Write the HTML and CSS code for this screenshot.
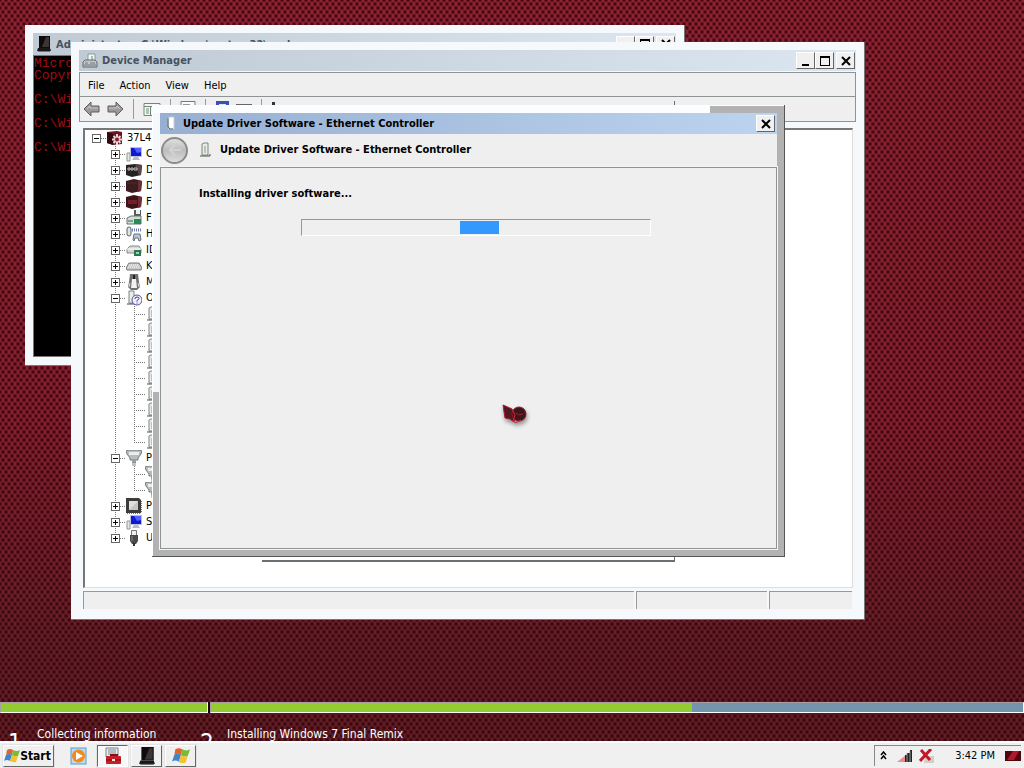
FILE: index.html
```
<!DOCTYPE html>
<html lang="en">
<head>
    <meta charset="UTF-8">
    <meta name="viewport" content="width=device-width, initial-scale=1.0">
    <title>Update Driver Software</title>
    <link rel="stylesheet" href="styles.css">
</head>
<body>
    <!-- Icon set -->
    <svg class="sprite" aria-hidden="true">
        <symbol id="i-root" viewBox="0 0 16 16"><path d="M0 2l10-1 5 1v12l-9 1-6-2z" fill="#6d1420"/><path d="M0 2l6 2v11l-6-2z" fill="#35090f"/><path d="M10 4v11M5 9.500h11M6.500 6l7 7M13.500 6l-7 7" stroke="#ead8da" stroke-width="2"/><circle cx="10" cy="9.500" r="2" fill="#8c1a28"/></symbol>
        <symbol id="i-computer" viewBox="0 0 16 16"><path d="M1 7h3v8H1z" fill="#e3ebe3" stroke="#8a9a8a"/><path d="M4 1h12v10H4z" fill="#b8c4dc"/><path d="M5 2h10v8H5z" fill="#1616d0"/><path d="M8 2h7v4l-4 1z" fill="#4f62ff"/><path d="M8 11h4l2 3H6z" fill="#b4bcc8"/></symbol>
        <symbol id="i-disk" viewBox="0 0 16 16"><path d="M0 3l9-1 7 1-1 10-9 2-6-2z" fill="#272224"/><path d="M9 2l7 1-1 10-2 .5z" fill="#5b4648"/><path d="M2 6h2v2H2zM5 6h2v2H5zM8 6h3v2H8z" stroke="#bfbfbf" fill="none"/></symbol>
        <symbol id="i-box" viewBox="0 0 16 16"><path d="M0 3l8-2 8 2-1 10-9 2-6-2z" fill="#3b1c1f"/><path d="M12 2l4 1-1 10-3 1z" fill="#6a3035"/><path d="M1 5h10" stroke="#57292d"/></symbol>
        <symbol id="i-redbox" viewBox="0 0 16 16"><path d="M0 3l8-2 8 2-1 10-9 2-6-2z" fill="#3d1418"/><path d="M2 6h9v4H2z" fill="#74202a"/><path d="M12 2l4 1-1 10-3 1z" fill="#6d3037"/></symbol>
        <symbol id="i-floppy" viewBox="0 0 16 16"><path d="M8 0h7v6H8z" fill="#555f5a"/><path d="M10 0h4v4h-4z" fill="#e8f2ee"/><path d="M1 8l4-2h10v8H1z" fill="#d5dbd8" stroke="#68756e"/><path d="M8 9h7v5H8z" fill="#2c8a55"/><path d="M2 11h5" stroke="#25744a"/></symbol>
        <symbol id="i-hid" viewBox="0 0 16 16"><rect x="1" y="1" width="4" height="9" rx="2" fill="#dfe3e4" stroke="#59646a"/><path d="M6 4h10" stroke="#6a7fb0" stroke-width="3" stroke-dasharray="1 1"/><path d="M7 14l1-6h6l1 6-2 1-1-3H9l-1 3z" fill="#bcc7d2" stroke="#627180"/></symbol>
        <symbol id="i-ide" viewBox="0 0 16 16"><path d="M1 7l3-3h9l2 3v4H1z" fill="#d8d8d8" stroke="#8a8a8a"/><path d="M1 7h14" stroke="#fff"/><path d="M8 8h7v6H8z" fill="#2b7552"/><path d="M10 10h3v2h-3z" fill="#9fd0b5"/></symbol>
        <symbol id="i-keyboard" viewBox="0 0 16 16"><path d="M3 5h10l3 5-1 2H1l-1-2z" fill="#c9c9c9" stroke="#777"/><path d="M3 7h10M2 9h12" stroke="#fff" stroke-dasharray="1 1"/></symbol>
        <symbol id="i-mouse" viewBox="0 0 16 16"><path d="M4 0h8l1 8 1 5-3 3H5l-3-3 1-5z" fill="#707070"/><path d="M6 5h4l1 9H5z" fill="#f2f2f2"/><path d="M4 9l-1 4M12 9l1 4" stroke="#ddd"/><path d="M7 1h2v4H7z" fill="#222"/></symbol>
        <symbol id="i-device" viewBox="0 0 16 16"><path d="M4 2l2-1h4v12H4z" fill="#e9ede9" stroke="#7c857c"/><path d="M7 4v7" stroke="#8b948b"/><path d="M2 14h10v-2" stroke="#4b514b" fill="none"/></symbol>
        <symbol id="i-plug" viewBox="0 0 16 16"><path d="M5 2l2-1h4v12H6z" fill="#fff" stroke="#c3cdd6"/><path d="M5 2v9l2 2h3" fill="none" stroke="#5d6a62"/></symbol>
        <symbol id="i-unknown" viewBox="0 0 16 16"><path d="M3 1h5v12H3z" fill="#e9ede9" stroke="#7c857c"/><path d="M1 14h8" stroke="#444"/><circle cx="11" cy="10" r="5" fill="#f2f1fb" stroke="#54509a"/><path d="M9 9q0-2 2-2t2 1.500q0 1-2 2v1M11 12.500v1" stroke="#3a3684" fill="none"/></symbol>
        <symbol id="i-port" viewBox="0 0 16 16"><path d="M0 1l3-1h10l3 1-1 3-3 4v2H4V8L1 4z" fill="#b7bcbc" stroke="#777d7d"/><path d="M3 2h10v3H3z" fill="#e9eded"/><path d="M6 10h4v3H6z" fill="#9ba1a1"/><path d="M7 12v4M9 12v4" stroke="#858b8b"/></symbol>
        <symbol id="i-cpu" viewBox="0 0 16 16"><path d="M0 0h13l2 2v13H0z" fill="#3e3b3a"/><path d="M3 3h9v9H3z" fill="#c8c6c4"/><path d="M3 3h9l-9 9z" fill="#e2e0de"/><path d="M1 15.500h14M15.500 3v12" stroke="#a86848" stroke-dasharray="1 1"/></symbol>
        <symbol id="i-usb" viewBox="0 0 16 16"><path d="M5.500 .500h5v5h-5z" fill="#eee" stroke="#777"/><path d="M4 5h8v6l-2 3H6l-2-3z" fill="#4a4a4a"/><path d="M6 6v5" stroke="#8b8b8b"/><path d="M8 13v3" stroke="#333" stroke-width="2"/></symbol>
        <symbol id="i-cmd" viewBox="0 0 16 16"><path d="M3 0h11v12H3z" fill="#100c0d"/><path d="M10 1h3v10H6z" fill="#3c3637"/><path d="M2 12h12l1 3H1z" fill="#1b1718"/><path d="M2 15.500h12" stroke="#777"/></symbol>
        <symbol id="i-flag" viewBox="0 0 16 16"><path d="M3 2q3-2 6 0L8 7Q5 5 2 7z" fill="#e2622a"/><path d="M9 2q4 2 7 0l-2 6q-3 1-6-1z" fill="#7cb83a"/><path d="M2 7q3-2 6 0l-2 6q-3-2-6 0z" fill="#3f85c9"/><path d="M8 7q3 2 6 1l-2 6q-3 1-6-1z" fill="#f2c230"/></symbol>
        <symbol id="i-devmgr" viewBox="0 0 16 16"><path d="M6 1h7v7H6z" fill="#f2f6f4" stroke="#8b989a"/><path d="M9 3h2v4H9z" fill="#a9bfae"/><path d="M1 9l2-2h10l2 2v5H1z" fill="#c2c8ca" stroke="#5e686d"/><path d="M3 10h3M8 10h5M2 12h12" stroke="#6e787d"/></symbol>
        <symbol id="i-toolbox" viewBox="0 0 18 18"><path d="M2 1h12v9H2z" fill="#e5ebee" stroke="#78858c"/><path d="M4 3h8M4 5h8M4 7h8" stroke="#7c9199"/><path d="M7 10V8h6v2" fill="none" stroke="#8a1018" stroke-width="2"/><rect x="2" y="9" width="15" height="8" rx="1" fill="#c81e28"/><path d="M2 13h15" stroke="#700b12"/><path d="M8 12h3v2H8z" fill="#eee"/></symbol>
        <symbol id="i-play" viewBox="0 0 18 18"><rect x="1" y="1" width="15" height="16" fill="#b8daf2" stroke="#5e9ac9"/><circle cx="8.500" cy="9" r="6.500" fill="#ef8c1d"/><path d="M6 5l7 4-7 4z" fill="#fff"/></symbol>
        <symbol id="i-arrow" viewBox="0 0 18 16"><path d="M1 8l7-7v4h8v6H8v4z" fill="#9b9b9b" stroke="#5e5e5e"/><path d="M4 8l3-3v2h8" fill="none" stroke="#c6c6c6"/></symbol>
        <symbol id="i-min" viewBox="0 0 12 12"><path d="M2 9h7v2H2z"/></symbol>
        <symbol id="i-max" viewBox="0 0 12 12"><path d="M1 1h10v10H1zM2 3v7h8V3z" fill-rule="evenodd"/></symbol>
        <symbol id="i-close" viewBox="0 0 12 12"><path d="M2 2l8 8M10 2l-8 8" stroke="#000" stroke-width="2"/></symbol>
    </svg>

    <main class="desktop">
        <section class="window cmd">
            <header class="titlebar">
                <svg class="icon"><use href="#i-cmd"/></svg>
                <h2>Administrator: C:\Windows\system32\cmd.exe</h2>
                <div class="controls">
                    <button aria-label="Minimize" disabled><svg></svg></button>
                    <button aria-label="Maximize"><svg><use href="#i-max"/></svg></button>
                    <button class="close" aria-label="Close"><svg><use href="#i-close"/></svg></button>
                </div>
            </header>
<pre class="console">Microsoft Windows [Version 6.1.7601]
Copyright (c) 2009 Microsoft Corporation.

C:\Windows\system32&gt;

C:\Windows\system32&gt;

C:\Windows\system32&gt;</pre>
        </section>

        <section class="window devmgr">
            <header class="titlebar">
                <svg class="icon"><use href="#i-devmgr"/></svg>
                <h2>Device Manager</h2>
                <div class="controls">
                    <button aria-label="Minimize"><svg><use href="#i-min"/></svg></button>
                    <button aria-label="Maximize"><svg><use href="#i-max"/></svg></button>
                    <button class="close" aria-label="Close"><svg><use href="#i-close"/></svg></button>
                </div>
            </header>
            <div class="bars">
                <nav class="menubar">
                    <button>File</button>
                    <button>Action</button>
                    <button>View</button>
                    <button>Help</button>
                </nav>
                <div class="toolbar">
                    <button aria-label="Back"><svg class="arrow"><use href="#i-arrow"/></svg></button>
                    <button aria-label="Forward"><svg class="arrow forward"><use href="#i-arrow"/></svg></button>
                    <span class="divider"></span>
                    <button aria-label="Show console tree"><svg width="18" height="16"><path d="M1 2.500h16v12H1z" fill="#f3f7f4" stroke="#71877b"/><path d="M1 5.500h16M7.500 5v9" stroke="#71877b"/><path d="M3 8h3M3 10h3M3 12h3" stroke="#6d8f7c"/><path d="M12 7v6l-3-3z" fill="#34844d"/></svg></button>
                    <span class="divider"></span>
                    <button aria-label="Properties"><svg width="16" height="16"><path d="M1 .500h14v15H1z" fill="#fafafa" stroke="#777"/><path d="M3 3.500h7" stroke="#999"/></svg></button>
                    <span class="divider"></span>
                    <button aria-label="Help"><svg width="16" height="16"><path d="M1 0h13v16H1z" fill="#3850b8"/><path d="M4 3h7v5H4z" fill="#e5e9fa"/></svg></button>
                    <button aria-label="Scan"><svg width="16" height="16"><path d="M0 3.500h16" stroke="#666"/></svg></button>
                    <span class="divider"></span>
                    <button aria-label="Update"><svg width="16" height="16"><path d="M1 1h3v4H1z" fill="#333"/></svg></button>
                </div>
            </div>
            <div class="tree">
                <div class="row"><button class="expander" aria-label="Collapse"></button><span class="dash"></span><svg class="icon"><use href="#i-root"/></svg>37L4247F27-25</div>
                <ul>
                    <li><div class="row"><button class="expander plus" aria-label="Expand"></button><span class="dash"></span><svg class="icon"><use href="#i-computer"/></svg>Computer</div></li>
                    <li><div class="row"><button class="expander plus" aria-label="Expand"></button><span class="dash"></span><svg class="icon"><use href="#i-disk"/></svg>Disk drives</div></li>
                    <li><div class="row"><button class="expander plus" aria-label="Expand"></button><span class="dash"></span><svg class="icon"><use href="#i-box"/></svg>Display adapters</div></li>
                    <li><div class="row"><button class="expander plus" aria-label="Expand"></button><span class="dash"></span><svg class="icon"><use href="#i-redbox"/></svg>Floppy disk drives</div></li>
                    <li><div class="row"><button class="expander plus" aria-label="Expand"></button><span class="dash"></span><svg class="icon"><use href="#i-floppy"/></svg>Floppy drive controllers</div></li>
                    <li><div class="row"><button class="expander plus" aria-label="Expand"></button><span class="dash"></span><svg class="icon"><use href="#i-hid"/></svg>Human Interface Devices</div></li>
                    <li><div class="row"><button class="expander plus" aria-label="Expand"></button><span class="dash"></span><svg class="icon"><use href="#i-ide"/></svg>IDE ATA/ATAPI controllers</div></li>
                    <li><div class="row"><button class="expander plus" aria-label="Expand"></button><span class="dash"></span><svg class="icon"><use href="#i-keyboard"/></svg>Keyboards</div></li>
                    <li><div class="row"><button class="expander plus" aria-label="Expand"></button><span class="dash"></span><svg class="icon"><use href="#i-mouse"/></svg>Mice and other pointing devices</div></li>
                    <li>
                        <div class="row"><button class="expander" aria-label="Collapse"></button><span class="dash"></span><svg class="icon"><use href="#i-unknown"/></svg>Other devices</div>
                        <ul>
                            <li><div class="row"><span class="dash"></span><svg class="icon"><use href="#i-device"/></svg>Base System Device</div></li>
                            <li><div class="row"><span class="dash"></span><svg class="icon"><use href="#i-device"/></svg>Base System Device</div></li>
                            <li><div class="row"><span class="dash"></span><svg class="icon"><use href="#i-device"/></svg>Ethernet Controller</div></li>
                            <li><div class="row"><span class="dash"></span><svg class="icon"><use href="#i-device"/></svg>Network Controller</div></li>
                            <li><div class="row"><span class="dash"></span><svg class="icon"><use href="#i-device"/></svg>PCI Device</div></li>
                            <li><div class="row"><span class="dash"></span><svg class="icon"><use href="#i-device"/></svg>PCI Device</div></li>
                            <li><div class="row"><span class="dash"></span><svg class="icon"><use href="#i-device"/></svg>SM Bus Controller</div></li>
                            <li><div class="row"><span class="dash"></span><svg class="icon"><use href="#i-device"/></svg>Unknown device</div></li>
                            <li><div class="row"><span class="dash"></span><svg class="icon"><use href="#i-device"/></svg>Unknown device</div></li>
                        </ul>
                    </li>
                    <li>
                        <div class="row"><button class="expander" aria-label="Collapse"></button><span class="dash"></span><svg class="icon"><use href="#i-port"/></svg>Ports (COM &amp; LPT)</div>
                        <ul>
                            <li><div class="row"><span class="dash"></span><svg class="icon"><use href="#i-port"/></svg>Communications Port (COM1)</div></li>
                            <li><div class="row"><span class="dash"></span><svg class="icon"><use href="#i-port"/></svg>Printer Port (LPT1)</div></li>
                        </ul>
                    </li>
                    <li><div class="row"><button class="expander plus" aria-label="Expand"></button><span class="dash"></span><svg class="icon"><use href="#i-cpu"/></svg>Processors</div></li>
                    <li><div class="row"><button class="expander plus" aria-label="Expand"></button><span class="dash"></span><svg class="icon"><use href="#i-computer"/></svg>System devices</div></li>
                    <li><div class="row"><button class="expander plus" aria-label="Expand"></button><span class="dash"></span><svg class="icon"><use href="#i-usb"/></svg>Universal Serial Bus controllers</div></li>
                </ul>
            </div>
            <footer class="statusbar"><span></span><span></span><span></span></footer>
        </section>

        <!-- Edge of the dialog underneath the wizard -->
        <div class="under-dialog"></div>

        <section class="window wizard">
            <header class="titlebar">
                <svg class="icon"><use href="#i-plug"/></svg>
                <h2>Update Driver Software - Ethernet Controller</h2>
                <div class="controls">
                    <button class="close" aria-label="Close"><svg><use href="#i-close"/></svg></button>
                </div>
            </header>
            <div class="wizard-head">
                <button class="back" aria-label="Back" disabled><svg width="14" height="12"><path d="M7 1L2 6l5 5M2 6h11" fill="none" stroke="#d2d2d2" stroke-width="2"/></svg></button>
                <svg class="icon"><use href="#i-device"/></svg>
                <h1>Update Driver Software - Ethernet Controller</h1>
            </div>
            <div class="wizard-body">
                <p id="status">Installing driver software...</p>
                <div class="progress" role="progressbar" aria-labelledby="status"><span></span></div>
            </div>
        </section>

        <!-- Mouse pointer -->
        <svg class="pointer" viewBox="0 0 32 30"><path d="M3 3l9 4 3 5-1 8-4-3-5-1z" fill="#4a1c22" stroke="#b5122b"/><circle cx="19" cy="12" r="7" fill="#3d161b" stroke="#8e1a2b"/><path d="M12 7l3 6-2 6 3 2 5-3" stroke="#d12640" fill="none"/><path d="M16 11l3 2 4-1" stroke="#8a2634" fill="none"/></svg>
    </main>

    <section class="setup">
        <div class="step">
            <div class="bar"><span style="width: 100%"></span></div>
            <p><b>1</b>Collecting information</p>
        </div>
        <div class="step">
            <div class="bar"><span style="width: 59.200%"></span></div>
            <p><b>2</b>Installing Windows 7 Final Remix</p>
        </div>
    </section>

    <footer class="taskbar">
        <button class="start"><svg class="icon"><use href="#i-flag"/></svg>Start</button>
        <button class="launch" aria-label="Media Player"><svg><use href="#i-play"/></svg></button>
        <button class="task active" aria-label="Device Manager"><svg><use href="#i-toolbox"/></svg></button>
        <button class="task" aria-label="Command Prompt"><svg><use href="#i-cmd"/></svg></button>
        <button class="task" aria-label="Windows Setup"><svg><use href="#i-flag"/></svg></button>
        <div class="tray">
            <svg width="7" height="10"><path d="M1 4l2.500-3L6 4M1 8l2.500-3L6 8" fill="none" stroke="#000" stroke-width="1.500"/></svg>
            <svg width="16" height="14"><path d="M0 13l9-7v7z" fill="#ec8a92"/><path d="M8 6h2v7H8zM10 4h3v9h-3zM13 1h2v12h-2z" fill="#222"/><path d="M10 4v9M13 2v11" stroke="#999"/></svg>
            <svg width="16" height="14"><path d="M6 7h9v7H5z" fill="#d0cfc8"/><path d="M2 1l9 10M12 0L1 12" stroke="#c3172a" stroke-width="3"/></svg>
            <time>3:42 PM</time>
            <svg width="16" height="10"><path d="M0 0h16v10H0z" fill="#4b0810"/><path d="M8 0h6l-5 9H2z" fill="#b2182a"/></svg>
        </div>
    </footer>
</body>
</html>
```

FILE: styles.css
```
* {
    margin: 0;
    padding: 0;
    box-sizing: border-box;
}

body {
    height: 100vh;
    display: flex;
    flex-direction: column;
    overflow: hidden;
    font: 11px/16px "DejaVu Sans Condensed", "Noto Sans", sans-serif;
    color: #000;
    /* woven dots over a red to black fade */
    background:
        radial-gradient(circle at 50% 50%, rgba(50,0,6,0.8) 1px, transparent 3px) 0 0 / 6px 8px,
        radial-gradient(circle at 50% 50%, rgba(50,0,6,0.8) 1px, transparent 3px) 3px 4px / 6px 8px,
        linear-gradient(#a32c3e, #98283a 55%, #6e2730 85%, #6a242c);
}

button {
    font: inherit;
    color: inherit;
    background: none;
    border: none;
}

svg {
    display: block;
    flex: none;
}

ul {
    list-style: none;
}

.sprite {
    position: absolute;
    width: 0;
    height: 0;
}

.icon {
    width: 16px;
    height: 16px;
}

.desktop {
    flex: 1;
    min-height: 0;
}

/* Windows */
.window {
    position: absolute;
    display: flex;
    flex-direction: column;
    padding: 8px;
    background: #f5f9fb;
    border-right: 1px solid #777;
    border-bottom: 1px solid #777;
}

.titlebar {
    display: flex;
    align-items: center;
    gap: 4px;
    height: 21px;
    flex: none;
    padding: 0 1px 0 3px;
    color: #46525e;
    background: linear-gradient(90deg, #bfcad4, #dce6f0);
}

.titlebar h2 {
    flex: 1;
    padding-top: 1px;
    font-size: 11px;
    white-space: nowrap;
}

.controls {
    display: flex;
}

.controls button {
    width: 19px;
    height: 17px;
    padding: 1px 3px;
    background: #f0f0f0;
    border: 1px solid;
    border-color: #fff #666 #666 #fff;
}

.controls .close {
    margin-left: 2px;
}

.controls svg {
    width: 12px;
    height: 12px;
}

.cmd {
    left: 25px;
    top: 25px;
    width: 660px;
    height: 341px;
}

.cmd .titlebar {
    height: 22px;
}

.console {
    flex: 1;
    padding-top: 2px;
    border: 1px solid #777;
    background: #000;
    color: #a00c14;
    font: 13px/12px "Liberation Mono", monospace;
}

.devmgr {
    left: 71px;
    top: 42px;
    width: 794px;
    height: 578px;
}

.bars {
    margin-top: 1px;
    border: 1px solid #8e9496;
    background: #efefef;
}

.menubar {
    display: flex;
    gap: 15px;
    padding: 5px 8px 2px;
    border-bottom: 1px solid #8e9496;
}

.toolbar {
    display: flex;
    align-items: center;
    gap: 5px;
    height: 24px;
    padding: 0 3px;
}

.divider {
    width: 1px;
    height: 20px;
    margin: 0 4px;
    background: #999;
}

.arrow {
    width: 18px;
    height: 16px;
}

.forward {
    transform: scaleX(-1);
}

/* Device tree */
.tree {
    flex: 1;
    min-height: 0;
    margin: 6px 3px 0 4px;
    padding: 0 0 0 7px;
    background: #fff;
    border: 1px solid #ddd;
    border-top: 2px solid #777;
    border-left: 2px solid #777;
    overflow: hidden;
}

.row {
    display: flex;
    align-items: center;
    height: 16px;
    white-space: nowrap;
}

.row .icon {
    margin-right: 4px;
}

.expander {
    width: 9px;
    height: 9px;
    flex: none;
    border: 1px solid #666;
    background: linear-gradient(#000, #000) 1px 3px / 5px 1px no-repeat #fff;
}

.expander.plus {
    background:
        linear-gradient(#000, #000) 1px 3px / 5px 1px no-repeat,
        linear-gradient(#000, #000) 3px 1px / 1px 5px no-repeat,
        #fff;
}

.dash {
    width: 6px;
    height: 1px;
    flex: none;
    background: repeating-linear-gradient(90deg, #777 0 1px, transparent 1px 2px);
}

.tree ul {
    margin-left: 23px;
}

.tree li {
    background: repeating-linear-gradient(#777 0 1px, transparent 1px 2px) 0 0 / 1px 100% no-repeat;
}

.tree li:last-child {
    background-size: 1px 8px;
}

.tree li .expander {
    margin-left: -4px;
}

.tree ul ul {
    margin-left: 19px;
}

.tree ul ul .dash {
    width: 11px;
}

.statusbar {
    display: grid;
    grid-template-columns: 551px 131px 1fr;
    gap: 2px;
    height: 18px;
    margin: 3px 4px 2px;
}

.statusbar span {
    background: #efefef;
    border-top: 1px solid #999;
    border-left: 1px solid #999;
}

.under-dialog {
    position: absolute;
    left: 262px;
    top: 101px;
    width: 413px;
    height: 461px;
    border: solid #6a6f73;
    border-width: 0 1px 2px 0;
}

/* Driver wizard */
.wizard {
    left: 152px;
    top: 105px;
    width: 633px;
    height: 452px;
    padding: 8px 7px 7px 8px;
    border-color: #555;
    background:
        linear-gradient(#fbfdfe, #fbfdfe) 0 0 / 558px 8px no-repeat,
        linear-gradient(#f5f9fb, #f5f9fb) 0 0 / 8px 287px no-repeat,
        #b2b2b2;
    box-shadow: inset 1px 1px #fff;
}

.wizard .titlebar {
    padding-right: 2px;
    color: #000;
    background: linear-gradient(90deg, #97b0d2, #bcd4ef);
}

.wizard-head {
    display: flex;
    align-items: center;
    height: 33px;
    padding: 0 1px 1px;
    background: #efefef;
}

.wizard-head h1 {
    margin-left: 6px;
    font-size: 11px;
}

.back {
    display: grid;
    place-items: center;
    width: 27px;
    height: 27px;
    margin-right: 10px;
    border: 2px solid #8b8b8b;
    border-radius: 50%;
    background: linear-gradient(#dedede, #bdbdbd 50%, #dcdcdc);
}

.wizard-body {
    flex: 1;
    padding: 18px 38px;
    background: #efefef;
    border: 1px solid #8e9496;
    outline: 1px solid #f5f5f5;
}

.wizard-body p {
    font-weight: bold;
}

.progress {
    width: 350px;
    height: 17px;
    margin: 17px auto 0 102px;
    padding: 1px;
    border: 1px solid;
    border-color: #939a93 #fff #fff #939a93;
}

.progress span {
    display: block;
    width: 39px;
    height: 13px;
    margin-left: 157px;
    background: #3399ff;
}

.pointer {
    position: absolute;
    left: 500px;
    top: 402px;
    width: 32px;
    height: 30px;
    filter: drop-shadow(1px 3px 2px rgba(0,0,0,0.4));
}

/* Setup progress strip */
.setup {
    display: grid;
    grid-template-columns: 208px 1fr;
    gap: 2px;
    height: 39px;
    overflow: hidden;
    color: #fff;
}

.bar {
    height: 11px;
    border: 1px solid;
    border-color: #a99ca4 #fff #fff #a99ca4;
    background: #7494ac;
    box-shadow: 2px 0 #1c0508;
}

.bar span {
    display: block;
    height: 9px;
    background: #92cc2e;
}

.step p {
    display: flex;
    margin-top: 13px;
    font-size: 12px;
}

.step b {
    width: 37px;
    padding-left: 8px;
    font-size: 24px;
    font-weight: normal;
    line-height: 34px;
}

.step + .step b {
    width: 17px;
    padding-left: 0;
    margin-left: -10px;
}

.step + .step p {
    gap: 10px;
}

/* Taskbar */
.taskbar {
    display: flex;
    align-items: center;
    height: 27px;
    flex: none;
    padding: 0 3px;
    background: #f0f0f0;
    border-top: 2px solid #fcfcfc;
}

.start,
.task {
    display: flex;
    align-items: center;
    justify-content: center;
    height: 22px;
    border: 1px solid;
    border-color: #fff #666 #666 #fff;
    outline: 1px solid #e3e3e3;
}

.start {
    width: 51px;
    padding-right: 2px;
    font-size: 12px;
    font-weight: bold;
}

.task {
    width: 31px;
    margin-right: 3px;
}

.task.active {
    border-color: #666 #fff #fff #666;
    background: #f8f8f8;
}

.task svg,
.launch svg {
    width: 18px;
    height: 18px;
}

.launch {
    margin: 0 9px 0 16px;
}

.tray {
    display: flex;
    align-items: center;
    gap: 10px;
    height: 21px;
    margin-left: auto;
    padding-left: 5px;
    border-top: 1px solid #888;
    border-left: 1px solid #888;
}

.tray svg + svg {
    margin-right: -4px;
}

.tray time {
    margin-left: 14px;
}
```
